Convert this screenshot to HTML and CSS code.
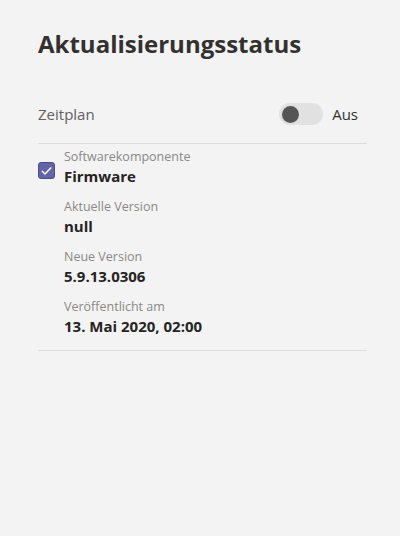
FILE: index.html
```html
<!DOCTYPE html>
<html lang="de">
<head>
  <meta charset="UTF-8">
  <meta name="viewport" content="width=device-width, initial-scale=1.0">
  <title>Aktualisierungsstatus</title>
  <link rel="stylesheet" href="styles.css">
</head>
<body>
  <main class="panel">
    <h1 class="title">Aktualisierungsstatus</h1>

    <div class="schedule">
      <span class="schedule-label">Zeitplan</span>
      <div class="switch">
        <span class="track"><span class="knob"></span></span>
        <span class="switch-text">Aus</span>
      </div>
    </div>

    <section class="update">
      <span class="check">
        <svg width="13" height="13" viewBox="0 0 13 13"><path d="M2 7l3 3L11.2 3.6" fill="none" stroke="#fff" stroke-width="1.5"/></svg>
      </span>
      <div class="fields">
        <div class="field">
          <span class="field-label">Softwarekomponente</span>
          <span class="field-value">Firmware</span>
        </div>
        <div class="field">
          <span class="field-label">Aktuelle Version</span>
          <span class="field-value">null</span>
        </div>
        <div class="field">
          <span class="field-label">Neue Version</span>
          <span class="field-value">5.9.13.0306</span>
        </div>
        <div class="field">
          <span class="field-label">Veröffentlicht am</span>
          <span class="field-value">13. Mai 2020, 02:00</span>
        </div>
      </div>
    </section>
  </main>
</body>
</html>
```

FILE: styles.css
```css
*,
*::after,
*::before {
  box-sizing: border-box;
}

body {
  margin: 0;
  background-color: #f3f3f3;
  font-family: "Open Sans", "Noto Sans", sans-serif;
  color: #252423;
}

.panel {
  padding: 28px 33px 0 38px;
}

.title {
  margin: 0;
  font-size: 24px;
  font-weight: 700;
  line-height: 32px;
  color: #323130;
}

.schedule {
  display: flex;
  align-items: center;
  justify-content: space-between;
  margin-top: 43px;
  padding-bottom: 18px;
  border-bottom: 1px solid #dcdcdc;
}

.schedule-label {
  font-size: 15px;
  color: #616161;
}

.switch {
  display: flex;
  align-items: center;
  gap: 9px;
  margin-right: 9px;
}

.track {
  display: flex;
  align-items: center;
  width: 44px;
  height: 22px;
  border-radius: 11px;
  background-color: #e1e1e1;
  padding-left: 3px;
}

.knob {
  width: 17px;
  height: 17px;
  border-radius: 50%;
  background-color: #555;
}

.switch-text {
  font-size: 15px;
  color: #323130;
}

.update {
  display: flex;
  gap: 9px;
  padding: 4px 0 14px;
  border-bottom: 1px solid #dcdcdc;
}

.check {
  display: flex;
  align-items: center;
  justify-content: center;
  flex: none;
  width: 17px;
  height: 17px;
  margin-top: 14px;
  border-radius: 3px;
  background-color: #6264a7;
  border: 1px solid #4b4d8a;
}

.fields {
  display: flex;
  flex-direction: column;
  gap: 12px;
}

.field {
  display: flex;
  flex-direction: column;
}

.field-label {
  font-size: 12.5px;
  line-height: 18px;
  color: #8a8886;
}

.field-value {
  font-size: 15px;
  line-height: 20px;
  font-weight: 700;
  color: #252423;
}
```
